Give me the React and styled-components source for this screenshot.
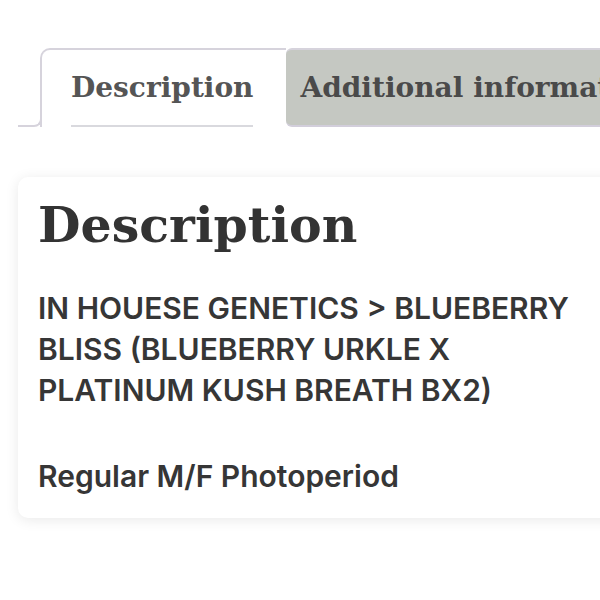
import React from "react";
import styled, { createGlobalStyle } from "styled-components";

const Global = createGlobalStyle`
  html, body { margin: 0; padding: 0; background: #ffffff; }
  body { width: 600px; height: 600px; overflow: hidden; }
`;

const Page = styled.div`
  padding: 48px 0 0 18px;
  width: 582px;
`;

const Tabs = styled.div`
  display: flex;
  align-items: stretch;
  height: 79px;
  white-space: nowrap;
  overflow: hidden;
  margin-right: -30px;
`;

const Stub = styled.div`
  width: 22px;
  flex: none;
  align-self: flex-end;
  height: 12px;
  border-right: 2px solid #d6d3dc;
  border-bottom: 2px solid #d6d3dc;
  border-bottom-right-radius: 8px;
  margin-right: -2px;
  position: relative;
  z-index: 1;
`;

const Tab = styled.div`
  flex: ${p => (p.active ? "none" : "1 0 auto")};
  display: flex;
  align-items: flex-end;
  box-sizing: border-box;
  font-family: "DejaVu Serif", Georgia, serif;
  font-weight: 700;
  font-size: 28px;
  color: ${p => (p.active ? "#555555" : "#4a4a4a")};
  background: ${p => (p.active ? "#ffffff" : "#c5c8c2")};
  border-top: 2px solid #d6d3dc;
  border-left: ${p => (p.active ? "2px solid #d6d3dc" : "none")};
  border-bottom: ${p => (p.active ? "none" : "2px solid #d2cedb")};
  border-radius: ${p => (p.active ? "10px 0 0 0" : "6px 0 0 6px")};
  padding: ${p => (p.active ? "0 33px 0 29px" : "0 0 0 14px")};
`;

const TabLabel = styled.span`
  display: block;
  padding-bottom: 21px;
  border-bottom: ${p => (p.active ? "2px solid #d9d9de" : "none")};
`;

const Card = styled.div`
  margin-top: 50px;
  width: 640px;
  box-sizing: border-box;
  background: #ffffff;
  border-radius: 10px;
  box-shadow: 0 2px 14px rgba(0, 0, 0, 0.09);
  padding: 16px 20px 21px 20px;
`;

const Heading = styled.h2`
  margin: 0 0 31px 0;
  font-family: "DejaVu Serif", Georgia, serif;
  font-weight: 700;
  font-size: 49px;
  line-height: 64px;
  color: #333333;
`;

const Para = styled.p`
  margin: 0 0 ${p => p.gap || 0}px 0;
  font-family: Inter, "Noto Sans", sans-serif;
  font-weight: 600;
  font-size: 30px;
  line-height: 41px;
  color: #363636;
  width: 550px;
`;

export default function App() {
  return (
    <>
      <Global />
      <Page>
        <Tabs>
          <Stub />
          <Tab active>
            <TabLabel active>Description</TabLabel>
          </Tab>
          <Tab>
            <TabLabel>Additional information</TabLabel>
          </Tab>
        </Tabs>
        <Card>
          <Heading>Description</Heading>
          <Para gap={45}>
            IN HOUESE GENETICS &gt; BLUEBERRY BLISS (BLUEBERRY URKLE X PLATINUM KUSH BREATH BX2)
          </Para>
          <Para>Regular M/F Photoperiod</Para>
        </Card>
      </Page>
    </>
  );
}
